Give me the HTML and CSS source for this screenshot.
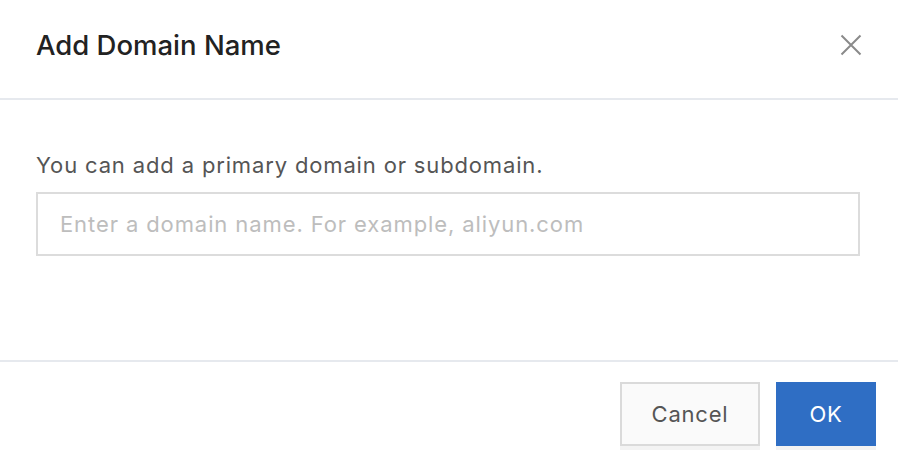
FILE: index.html
```html
<!DOCTYPE html>
<html lang="en">
<head>
<meta charset="utf-8">
<title>Add Domain Name</title>
<link rel="stylesheet" href="styles.css">
</head>
<body>
<div class="dialog">
  <div class="header">
    <h1 class="title">Add Domain Name</h1>
    <button class="close" aria-label="Close">
      <svg width="22" height="22" viewBox="0 0 22 22"><path d="M1.5 1.5 L20.5 20.5 M20.5 1.5 L1.5 20.5" stroke="#8a8a8a" stroke-width="2" fill="none"/></svg>
    </button>
  </div>
  <div class="body">
    <p class="hint">You can add a primary domain or subdomain.</p>
    <input class="field" type="text" placeholder="Enter a domain name. For example, aliyun.com">
  </div>
  <div class="footer">
    <button class="btn btn-cancel">Cancel</button>
    <button class="btn btn-ok">OK</button>
  </div>
</div>
</body>
</html>
```
FILE: styles.css
```css
* { box-sizing: border-box; }
html, body { margin: 0; padding: 0; background: #fff; }
body { font-family: Inter, "Liberation Sans", sans-serif; width: 898px; height: 462px; overflow: hidden; }
.dialog { display: flex; flex-direction: column; height: 462px; }
.header {
  height: 100px;
  display: flex; align-items: center; justify-content: space-between;
  padding: 0 36px 8px 36px;
  border-bottom: 2px solid #e6e9ee;
}
.title { margin: 0; font-size: 27.5px; font-weight: 500; color: #222; letter-spacing: 0; }
.close { background: none; border: 0; padding: 0; width: 22px; height: 22px; margin-right: 0; display: flex; }
.body { height: 260px; padding: 52px 38px 0 36px; }
.hint { margin: 0 0 14px; font-size: 22px; line-height: 26px; color: #555; letter-spacing: 0.85px; }
.field {
  display: block; width: 100%; height: 64px;
  border: 2px solid #dcdcdc; padding: 0 22px;
  font-family: inherit; font-size: 22px; letter-spacing: 0.9px; color: #333; outline: none;
}
.field::placeholder { color: #bdbdbd; }
.footer {
  border-top: 2px solid #e6e9ee;
  display: flex; justify-content: flex-end; gap: 16px;
  padding: 20px 22px 0 0;
}
.btn {
  height: 64px; font-family: inherit; font-size: 22px; letter-spacing: 0.8px; cursor: pointer;
  box-shadow: 0 4px 0 #f3f3f3;
}
.btn-cancel { width: 140px; background: #fafafa; border: 2px solid #dadada; color: #555; }
.btn-ok { width: 100px; background: #2f6ec4; border: 0; color: #fff; }
```
